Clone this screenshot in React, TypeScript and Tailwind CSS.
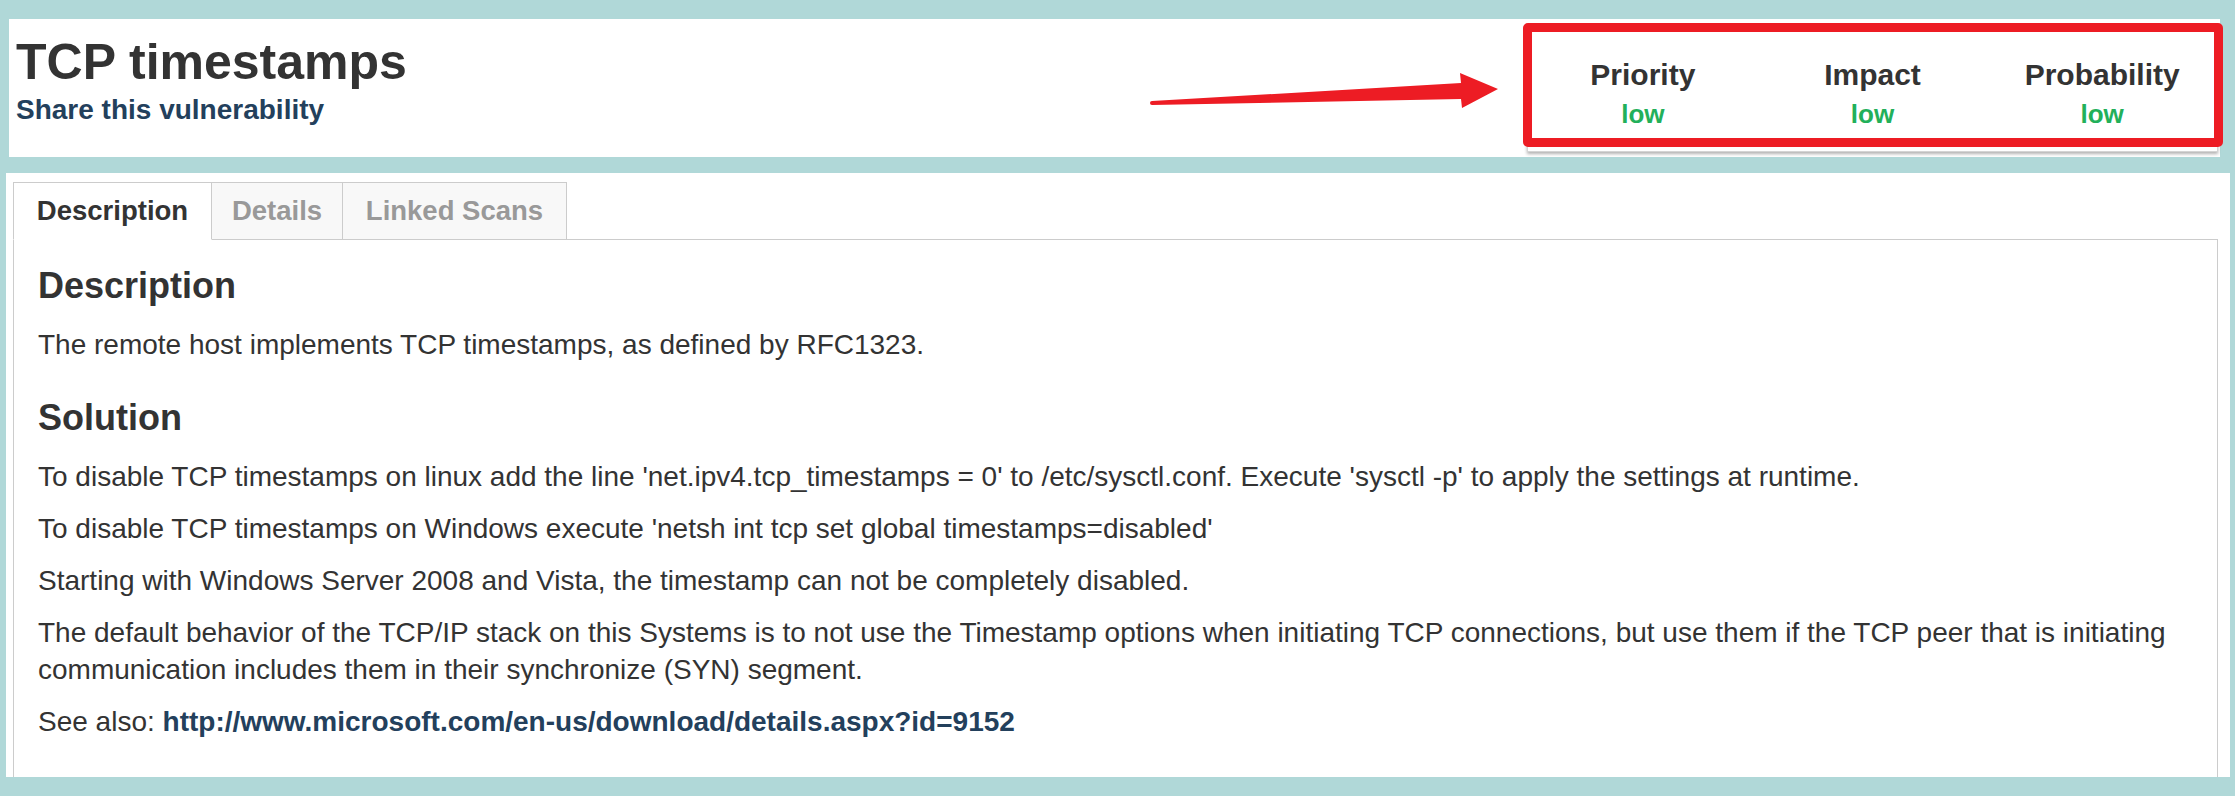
import React from 'react';

const font = { fontFamily: '"Liberation Sans", Arial, sans-serif' };

const tabs = [
  { label: 'Description', width: 'w-[199px]', active: true },
  { label: 'Details', width: 'w-[132px]', active: false },
  { label: 'Linked Scans', width: 'w-[225px]', active: false },
];

const stats = [
  { label: 'Priority', value: 'low' },
  { label: 'Impact', value: 'low' },
  { label: 'Probability', value: 'low' },
];

const Arrow: React.FC = () => (
  <svg
    className="absolute left-[1131px] top-[41px] pointer-events-none"
    width="370"
    height="60"
    viewBox="0 0 370 60"
  >
    <polygon
      points="12,41 321,23 320,13 358,29 322,48 321,39 12,45"
      fill="#ed1c24"
    />
    <circle cx="12" cy="43" r="2" fill="#ed1c24" />
  </svg>
);

const App: React.FC = () => {
  return (
    <div className="w-full h-[796px] bg-[#b0d8d8] pt-[19px] pb-[19px] flex flex-col overflow-hidden text-[#333]" style={font}>
      {/* header */}
      <div className="relative ml-[9px] mr-[15px] h-[138px] bg-white flex justify-between">
        <div className="pl-[7px] pt-[18px]">
          <h1 className="text-[50px] leading-[50px] font-bold text-[#333]">TCP timestamps</h1>
          <a className="block mt-[9px] text-[28px] leading-[28px] font-bold text-[#23405c]">
            Share this vulnerability
          </a>
        </div>

        <div className="relative mt-[9px] mr-[2px] mb-[5px] w-[691px] border border-[#d4d4d4] shadow-[0_2px_3px_rgba(0,0,0,0.3)] bg-white grid grid-cols-3 pt-[31px]">
          {stats.map(s => (
            <div key={s.label} className="flex flex-col items-center">
              <span className="text-[30px] leading-[30px] font-bold text-[#333]">{s.label}</span>
              <span className="mt-[11px] text-[26px] leading-[26px] font-bold text-[#22b05a]">{s.value}</span>
            </div>
          ))}
          <div className="absolute -left-[5px] -right-[6px] -top-[6px] bottom-[4px] border-[9px] border-[#ed1c24] rounded-[5px]" />
        </div>

        <Arrow />
      </div>

      {/* content */}
      <div className="mt-[16px] ml-[6px] mr-[5px] flex-1 bg-white pt-[9px] pl-[7px] pr-[12px] flex flex-col overflow-hidden">
        <div className="flex h-[58px]">
          {tabs.map(t => (
            <div
              key={t.label}
              className={
                t.active
                  ? `${t.width} flex items-center justify-center border border-[#ccc] border-b-white bg-white text-[27.5px] font-bold text-[#333] -mr-px relative z-10 h-[58px]`
                  : `${t.width} flex items-center justify-center border border-[#ccc] border-b-0 bg-[#f8f8f8] text-[27.5px] font-bold text-[#999] -mr-px h-[57px]`
              }
            >
              {t.label}
            </div>
          ))}
        </div>

        <div className="flex-1 -mt-px border border-b-0 border-[#ccc] pl-[24px] pr-[24px] pt-[28px]">
          <h3 className="text-[36px] leading-[36px] font-bold text-[#333] mb-[22px]">Description</h3>
          <p className="text-[28px] leading-[37px] mb-[15px]">
            The remote host implements TCP timestamps, as defined by RFC1323.
          </p>

          <h3 className="text-[36px] leading-[36px] font-bold text-[#333] mt-[37px] mb-[22px]">Solution</h3>
          <p className="text-[28px] leading-[37px] mb-[15px]">
            To disable TCP timestamps on linux add the line 'net.ipv4.tcp_timestamps = 0' to /etc/sysctl.conf. Execute 'sysctl -p' to apply the settings at runtime.
          </p>
          <p className="text-[28px] leading-[37px] mb-[15px]">
            To disable TCP timestamps on Windows execute 'netsh int tcp set global timestamps=disabled'
          </p>
          <p className="text-[28px] leading-[37px] mb-[15px]">
            Starting with Windows Server 2008 and Vista, the timestamp can not be completely disabled.
          </p>
          <p className="text-[28px] leading-[37px] mb-[15px]">
            The default behavior of the TCP/IP stack on this Systems is to not use the Timestamp options when initiating TCP connections, but use them if the TCP peer that is initiating communication includes them in their synchronize (SYN) segment.
          </p>
          <p className="text-[28px] leading-[37px] mb-[15px]">
            See also:{' '}
            <a className="font-bold text-[#23405c]">http://www.microsoft.com/en-us/download/details.aspx?id=9152</a>
          </p>
        </div>
      </div>
    </div>
  );
};

export default App;
